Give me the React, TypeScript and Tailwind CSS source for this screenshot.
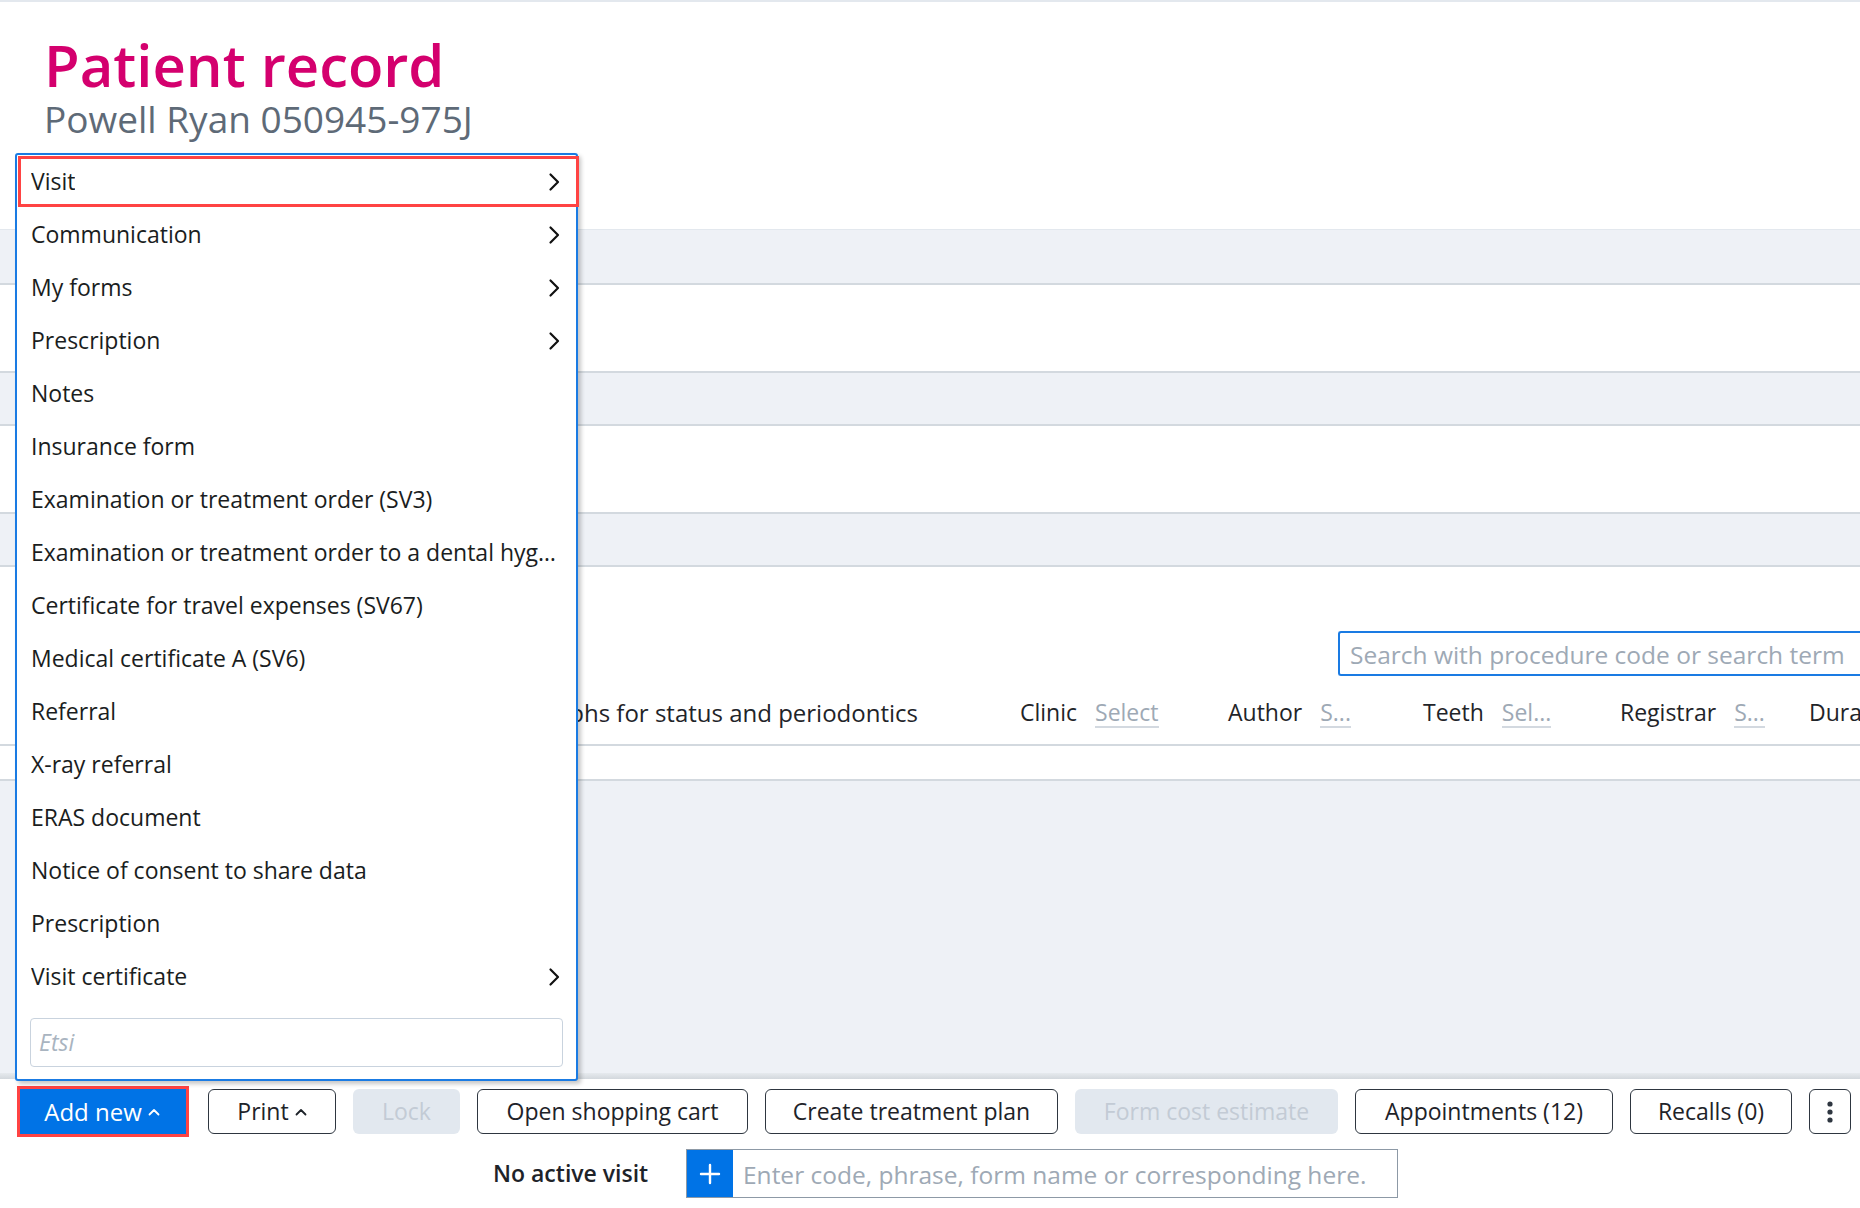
import React from "react";

const menuItems: { label: string; sub?: boolean }[] = [
  { label: "Visit", sub: true },
  { label: "Communication", sub: true },
  { label: "My forms", sub: true },
  { label: "Prescription", sub: true },
  { label: "Notes" },
  { label: "Insurance form" },
  { label: "Examination or treatment order (SV3)" },
  { label: "Examination or treatment order to a dental hygienist (SV3H)" },
  { label: "Certificate for travel expenses (SV67)" },
  { label: "Medical certificate A (SV6)" },
  { label: "Referral" },
  { label: "X-ray referral" },
  { label: "ERAS document" },
  { label: "Notice of consent to share data" },
  { label: "Prescription" },
  { label: "Visit certificate", sub: true },
];

function Chevron() {
  return (
    <svg width="12" height="20" viewBox="0 0 12 20" className="shrink-0">
      <path d="M2.5 2.5 L10 10 L2.5 17.5" fill="none" stroke="#111" strokeWidth="2.2" strokeLinecap="round" strokeLinejoin="round" />
    </svg>
  );
}

function CaretUp({ color }: { color: string }) {
  return (
    <svg width="12" height="8" viewBox="0 0 12 8" className="ml-[6px]">
      <path d="M1.5 6.5 L6 2 L10.5 6.5" fill="none" stroke={color} strokeWidth="1.8" strokeLinecap="round" strokeLinejoin="round" />
    </svg>
  );
}

function FilterItem({ label, value, width }: { label: string; value: string; width: string }) {
  return (
    <div className={`flex shrink-0 items-center gap-[18px] ${width}`}>
      <span className="text-[#1f2429]">{label}</span>
      <span className="border-b-2 border-[#d3d9e0] leading-[28px] text-[#9ea9b5]">{value}</span>
    </div>
  );
}

export default function App() {
  const outlineBtn =
    "flex h-[45px] shrink-0 items-center justify-center rounded-[6px] border-[1.5px] border-[#2e3640] bg-white text-[23px] text-[#1e2329]";
  const disabledBtn =
    "flex h-[45px] shrink-0 items-center justify-center rounded-[6px] bg-[#e2e8ef] text-[23px] text-[#c3cbd5]";

  return (
    <div className="relative h-[1208px] w-[1860px] overflow-hidden border-t-2 border-[#e3e8ee] bg-white font-['Open_Sans',sans-serif]">
      {/* header */}
      <div className="h-[227px] pl-[44px] pt-[33px]">
        <h1 className="text-[58px] font-semibold leading-[60px] text-[#d4006e]">Patient record</h1>
        <div className="mt-[5px] text-[37px] leading-none text-[#5e6a77]">Powell Ryan 050945-975J</div>
      </div>

      {/* record sections */}
      <div className="h-[56px] border-t border-b-2 border-t-[#e3e8ee] border-b-[#d3d9df] bg-[#eef1f6]" />
      <div className="h-[86px]" />
      <div className="h-[55px] border-y-2 border-[#d3d9df] bg-[#eef1f6]" />
      <div className="h-[86px]" />
      <div className="h-[55px] border-y-2 border-[#d3d9df] bg-[#eef1f6]" />

      <div className="h-[177px] pt-[64px] text-[23px]">
        <div className="flex justify-end">
          <div className="flex h-[45px] w-[522px] items-center whitespace-nowrap rounded-l-[3px] border-y-2 border-l-2 border-[#1a7be3] pl-[10px] pt-[3px] text-[24.5px] text-[#9ea9b5]">
            Search with procedure code or search term
          </div>
        </div>
        <div className="mt-[14px] flex h-[45px] items-center whitespace-nowrap">
          <div className="w-[918px] shrink-0 text-right text-[24px] text-[#1f2429]">Show graphs for status and periodontics</div>
          <div className="ml-[102px] flex">
            <FilterItem label="Clinic" value="Select" width="w-[208px]" />
            <FilterItem label="Author" value="S..." width="w-[195px]" />
            <FilterItem label="Teeth" value="Sel..." width="w-[197px]" />
            <FilterItem label="Registrar" value="S..." width="w-[189px]" />
            <span className="text-[#1f2429]">Dura</span>
          </div>
        </div>
      </div>

      <div className="h-[37px] border-y-2 border-[#d3d9df]" />
      <div className="h-[292px] bg-[#eef1f6]" />
      <div className="h-[6px] bg-gradient-to-b from-[#e6eaee] to-[#d3d8dd]" />

      {/* toolbar */}
      <div className="pl-[20px] pt-[10px]">
        <div className="flex items-center gap-[17px]">
          <button className="flex h-[45px] w-[166px] items-center justify-center bg-[#0073e6] pr-[2px] text-[24px] text-white outline outline-[3px] outline-[#ff4343]">
            Add new
            <CaretUp color="#ffffff" />
          </button>
          <button className={`${outlineBtn} ml-[5px] w-[128px]`}>
            Print
            <CaretUp color="#1e2329" />
          </button>
          <button className={`${disabledBtn} w-[107px]`}>Lock</button>
          <button className={`${outlineBtn} w-[271px]`}>Open shopping cart</button>
          <button className={`${outlineBtn} w-[293px]`}>Create treatment plan</button>
          <button className={`${disabledBtn} w-[263px]`}>Form cost estimate</button>
          <button className={`${outlineBtn} w-[258px]`}>Appointments (12)</button>
          <button className={`${outlineBtn} w-[162px]`}>Recalls (0)</button>
          <button className={`${outlineBtn} w-[42px]`}>
            <svg width="6" height="24" viewBox="0 0 6 24">
              <circle cx="3" cy="4" r="2.6" fill="#2e3640" />
              <circle cx="3" cy="12" r="2.6" fill="#2e3640" />
              <circle cx="3" cy="20" r="2.6" fill="#2e3640" />
            </svg>
          </button>
        </div>

        <div className="mt-[15px] flex items-center pl-[473px] text-[23px]">
          <span className="w-[193px] shrink-0 whitespace-nowrap font-semibold text-[#1e2329]">No active visit</span>
          <div className="flex h-[49px] w-[712px] items-stretch border-[1.5px] border-[#8d99a6]">
            <div className="flex w-[46px] items-center justify-center bg-[#0073e6]">
              <svg width="22" height="22" viewBox="0 0 22 22">
                <path d="M11 2 V20 M2 11 H20" stroke="#fff" strokeWidth="2.4" strokeLinecap="round" />
              </svg>
            </div>
            <div className="flex items-center whitespace-nowrap pl-[10px] pt-[3px] text-[24.5px] text-[#9ea9b5]">
              Enter code, phrase, form name or corresponding here.
            </div>
          </div>
        </div>
      </div>

      {/* add new menu */}
      <div className="absolute left-[15px] top-[151px] flex h-[928px] w-[563px] flex-col rounded-[3px] border-2 border-[#1a7be3] bg-white shadow-[3px_3px_4px_rgba(0,0,0,0.22)]">
        {menuItems.map((item, i) => (
          <div key={i} className="relative flex h-[53px] shrink-0 items-center justify-between pl-[14px] pr-[16px] text-[23px] text-[#1a1d21]">
            <span className="truncate">{item.label}</span>
            {item.sub && <Chevron />}
            {i === 0 && <div className="absolute -right-[3px] bottom-[1px] left-[1px] top-[1px] border-[3px] border-[#ff4343]" />}
          </div>
        ))}
        <div className="mx-[13px] mt-[15px] flex h-[49px] items-center rounded-[4px] border-[1.5px] border-[#c9d3de] pl-[8px] text-[23px] italic text-[#a9b4c0]">
          Etsi
        </div>
      </div>
    </div>
  );
}
